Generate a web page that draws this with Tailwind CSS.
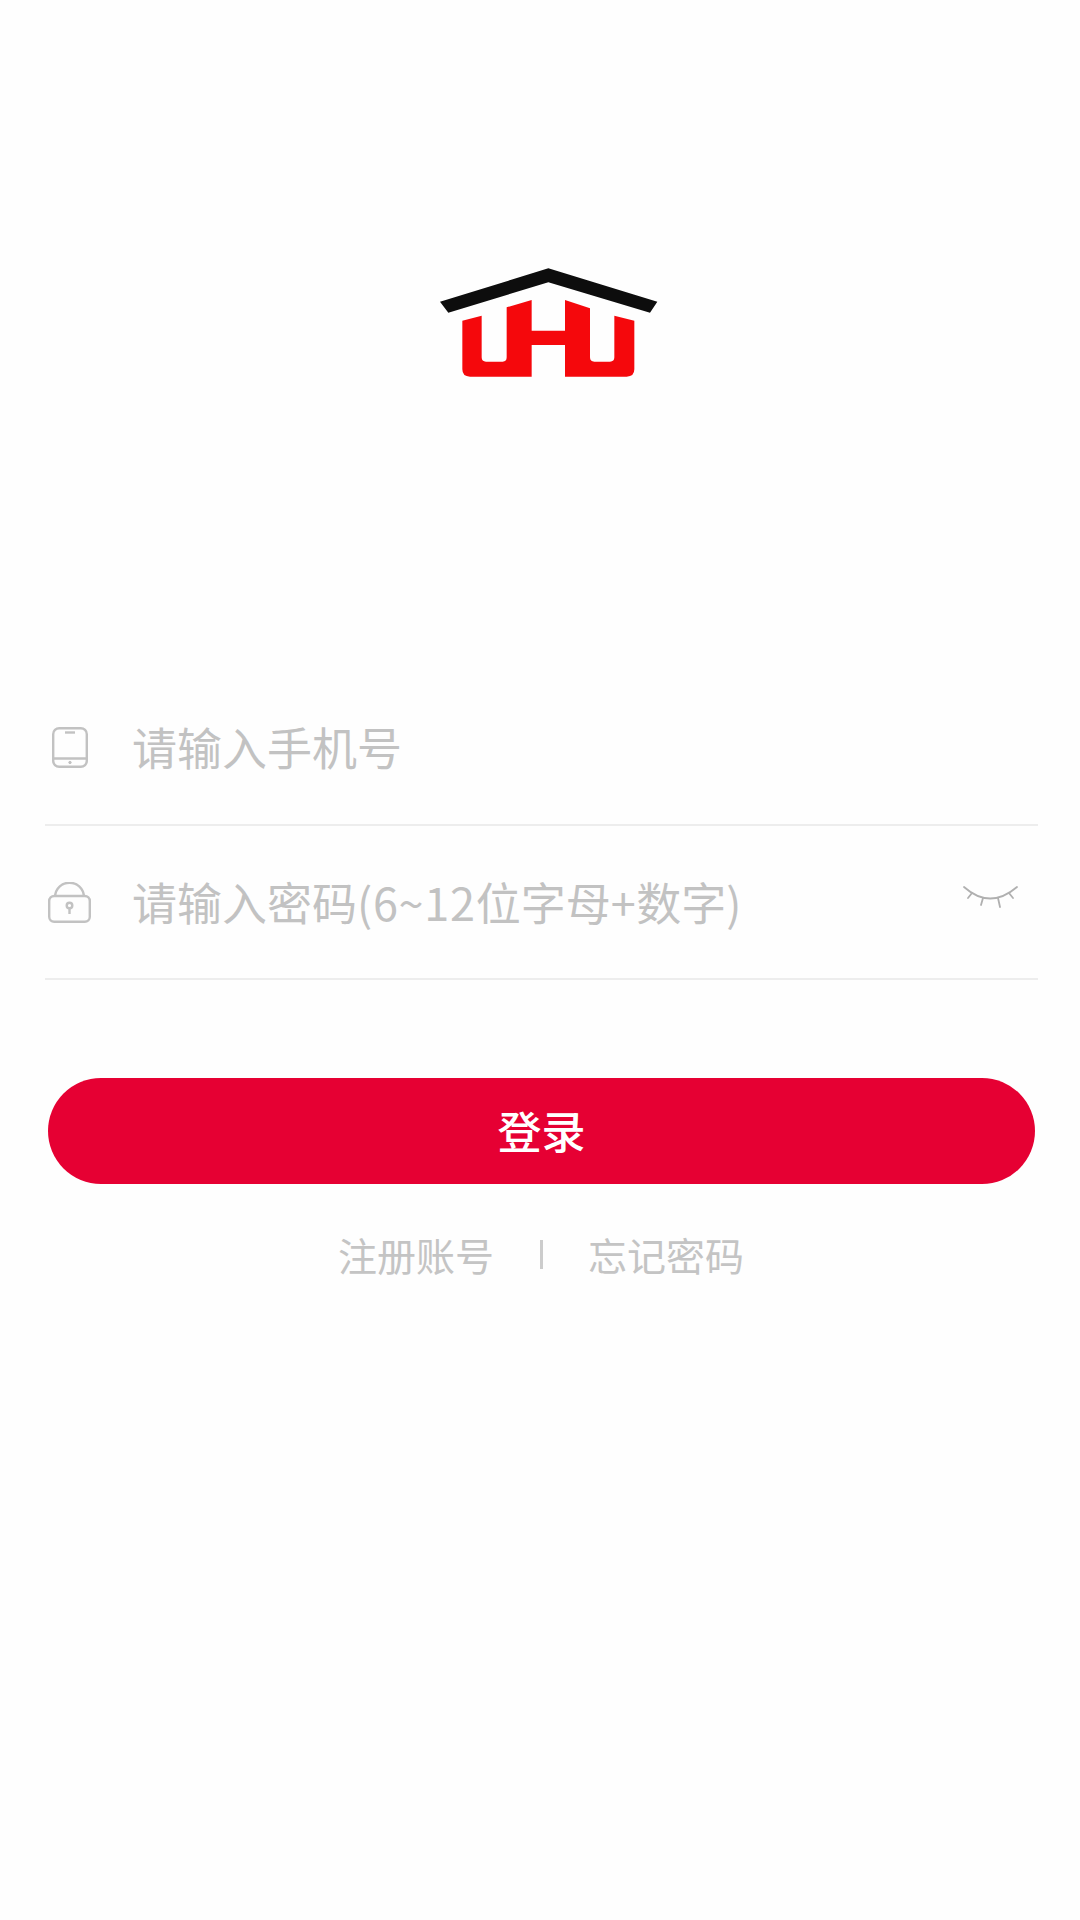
<!DOCTYPE html>
<html lang="zh-CN">
<head>
<meta charset="utf-8">
<script src="https://cdn.jsdelivr.net/npm/@tailwindcss/browser@4"></script>
</head>
<body class="bg-[#fefefe] font-['Noto_Sans_CJK_SC','Noto_Sans',sans-serif]">
<main class="w-[1080px] h-[1920px] overflow-hidden flex flex-col">
  <div class="pt-[250px] pl-[420px]">
    <svg class="block w-[250px] h-[140px]" viewBox="0 0 750 420">
      <path fill="#0d0d0d" d="M60 155 L385 55 L712 155 L690 188 L385 97 L85 188 Z"/>
      <path fill="#f5080c" d="M127 212 L185 197 L185 322 Q185 335 198 335 L248 335 Q260 335 260 322 L260 172 L335 150 L335 242 L435 242 L435 150 L510 175 L510 322 Q510 335 523 335 L570 335 Q583 335 583 322 L583 197 L643 212 L643 358 Q643 380 620 380 L435 380 L435 285 L335 285 L335 380 L150 380 Q127 380 127 358 Z"/>
    </svg>
  </div>
  <div class="mt-[281px] ml-[45px] mr-[42px]">
    <div class="h-[155px] border-b-2 border-[#ededed] flex items-center">
      <div class="w-[87px] pl-[7px] shrink-0">
        <svg class="block w-[36px] h-[41px]" viewBox="0 0 36 41" fill="none" stroke="#c2c2c2" stroke-width="2.4">
          <rect x="1.2" y="1.2" width="33.6" height="38.6" rx="6"/>
          <path d="M1 31.5 H35"/>
          <path d="M13 5.5 H23"/>
          <circle cx="18" cy="35.5" r="1.2" fill="#c2c2c2" stroke-width="1"/>
        </svg>
      </div>
      <span class="mb-[2px] text-[45px] leading-none text-[#c2c2c2]">请输入手机号</span>
    </div>
    <div class="h-[154px] border-b-2 border-[#ededed] flex items-center">
      <div class="w-[87px] pl-[3px] shrink-0">
        <svg class="block w-[43px] h-[41px]" viewBox="0 0 43 41" fill="none" stroke="#c2c2c2" stroke-width="2.4">
          <rect x="1.2" y="14" width="40.6" height="25.8" rx="5"/>
          <path d="M7 15 C8 -4 35 -4 36 15"/>
          <circle cx="21.5" cy="23.5" r="2.8"/>
          <path d="M21.5 26 V32"/>
        </svg>
      </div>
      <span class="mb-[2px] text-[45px] leading-none text-[#c2c2c2]">请输入密码<span class="tracking-[0.7px]">(6~12</span>位字母<span class="tracking-[0.7px]">+</span>数字<span>)</span></span>
      <svg class="block ml-auto mr-[19px] w-[56px] h-[24px] -translate-y-[4px]" viewBox="0 0 56 24" fill="none" stroke="#b0b0b0" stroke-width="1.8" stroke-linecap="round">
        <path d="M1 1 Q27 24 54 1"/>
        <path d="M9 7 L5 12"/>
        <path d="M20 12 L18 19"/>
        <path d="M35 12 L37 21"/>
        <path d="M46 7 L50 12"/>
      </svg>
    </div>
  </div>
  <button class="mt-[98px] ml-[48px] mr-[45px] h-[106px] pb-[2px] rounded-full bg-[#e60033] text-white text-[44px] font-medium leading-none flex items-center justify-center">登录</button>
  <div class="mt-[48px] ml-[338px] flex items-center text-[39px] leading-[44px] text-[#c4c4c4]">
    <span>注册账号</span>
    <span class="ml-[46px] w-[3px] h-[29px] bg-[#cccccc]"></span>
    <span class="ml-[45px]">忘记密码</span>
  </div>
</main>
</body>
</html>
